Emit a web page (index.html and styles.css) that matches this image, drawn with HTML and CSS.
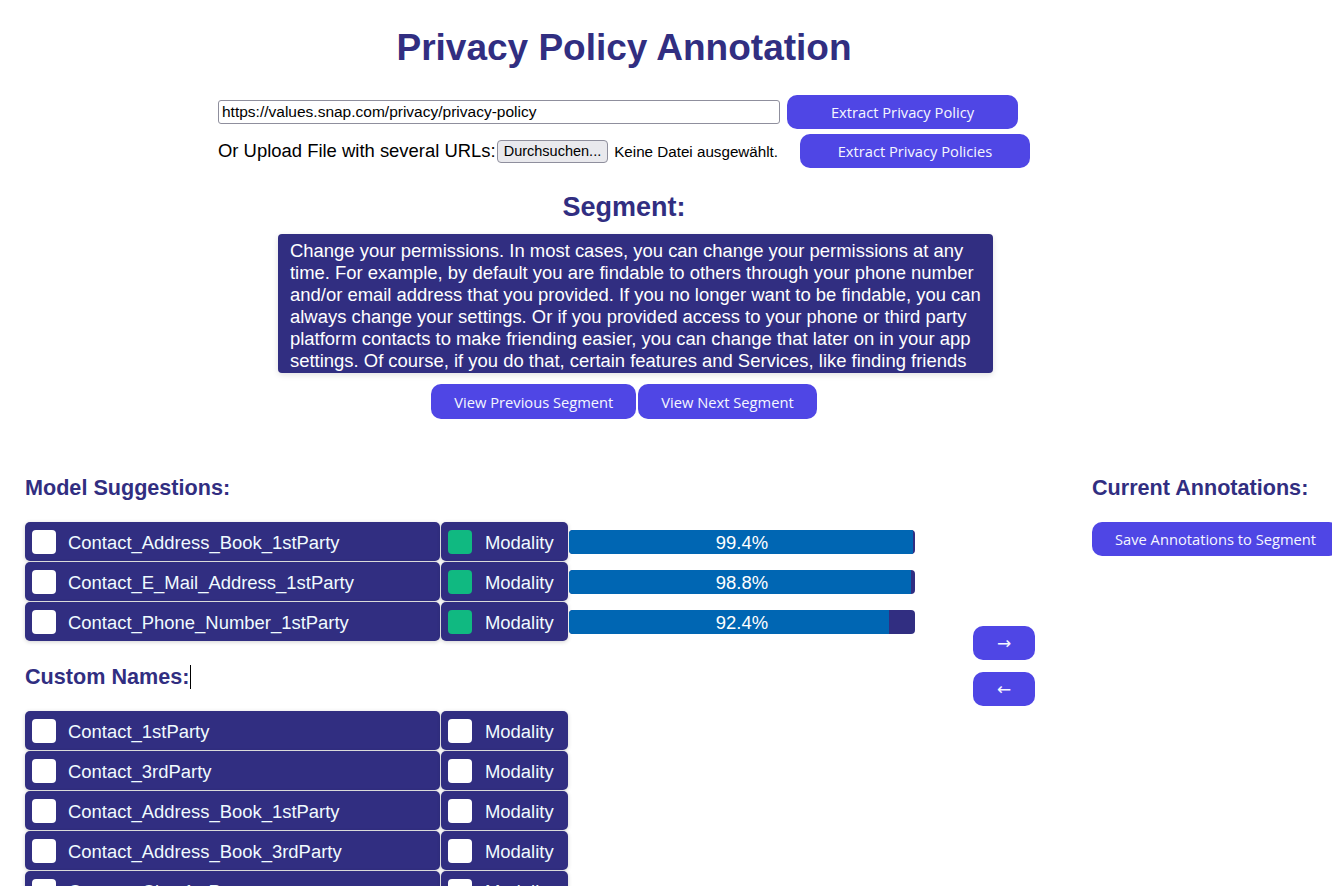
FILE: index.html
```html
<!DOCTYPE html>
<html lang="en">
<head>
<meta charset="utf-8">
<title>Privacy Policy Annotation</title>
<link rel="stylesheet" href="styles.css">
</head>
<body>
<header class="top">
  <h1 class="title">Privacy Policy Annotation</h1>
  <div class="url-form">
    <div class="url-row">
      <input class="url-input" type="text" value="https://values.snap.com/privacy/privacy-policy">
      <button class="btn btn-wide">Extract Privacy Policy</button>
    </div>
    <div class="upload-row">
      <span class="upload-label">Or Upload File with several URLs:</span>
      <span class="file-btn">Durchsuchen...</span>
      <span class="file-name">Keine Datei ausgewählt.</span>
      <button class="btn btn-wide btn-push">Extract Privacy Policies</button>
    </div>
  </div>
  <h2 class="segment-title">Segment:</h2>
  <div class="segment-box">Change your permissions. In most cases, you can change your permissions at any time. For example, by default you are findable to others through your phone number and/or email address that you provided. If you no longer want to be findable, you can always change your settings. Or if you provided access to your phone or third party platform contacts to make friending easier, you can change that later on in your app settings. Of course, if you do that, certain features and Services, like finding friends via your contacts, may lose full functionality.</div>
  <div class="segment-nav">
    <button class="btn btn-nav">View Previous Segment</button>
    <button class="btn btn-nav">View Next Segment</button>
  </div>
</header>

<main class="workspace">
  <section class="suggestions">
    <h3 class="section-title">Model Suggestions:</h3>
    <div class="label-list">
      <div class="label-row">
        <div class="label-box"><span class="check"></span><span class="name">Contact_Address_Book_1stParty</span></div>
        <div class="mod-box"><span class="check check-on"></span><span class="name">Modality</span></div>
        <div class="conf-bar"><div class="conf-fill" style="width: 99.4%"></div><span class="conf-text">99.4%</span></div>
      </div>
      <div class="label-row">
        <div class="label-box"><span class="check"></span><span class="name">Contact_E_Mail_Address_1stParty</span></div>
        <div class="mod-box"><span class="check check-on"></span><span class="name">Modality</span></div>
        <div class="conf-bar"><div class="conf-fill" style="width: 98.8%"></div><span class="conf-text">98.8%</span></div>
      </div>
      <div class="label-row">
        <div class="label-box"><span class="check"></span><span class="name">Contact_Phone_Number_1stParty</span></div>
        <div class="mod-box"><span class="check check-on"></span><span class="name">Modality</span></div>
        <div class="conf-bar"><div class="conf-fill" style="width: 92.4%"></div><span class="conf-text">92.4%</span></div>
      </div>
    </div>

    <h3 class="section-title section-custom">Custom Names:<span class="caret"></span></h3>
    <div class="label-list">
      <div class="label-row">
        <div class="label-box"><span class="check"></span><span class="name">Contact_1stParty</span></div>
        <div class="mod-box"><span class="check"></span><span class="name">Modality</span></div>
      </div>
      <div class="label-row">
        <div class="label-box"><span class="check"></span><span class="name">Contact_3rdParty</span></div>
        <div class="mod-box"><span class="check"></span><span class="name">Modality</span></div>
      </div>
      <div class="label-row">
        <div class="label-box"><span class="check"></span><span class="name">Contact_Address_Book_1stParty</span></div>
        <div class="mod-box"><span class="check"></span><span class="name">Modality</span></div>
      </div>
      <div class="label-row">
        <div class="label-box"><span class="check"></span><span class="name">Contact_Address_Book_3rdParty</span></div>
        <div class="mod-box"><span class="check"></span><span class="name">Modality</span></div>
      </div>
      <div class="label-row">
        <div class="label-box"><span class="check"></span><span class="name">Contact_City_1stParty</span></div>
        <div class="mod-box"><span class="check"></span><span class="name">Modality</span></div>
      </div>
    </div>
  </section>

  <div class="transfer">
    <button class="btn btn-arrow">&#8594;</button>
    <button class="btn btn-arrow">&#8592;</button>
  </div>

  <section class="annotations">
    <h3 class="section-title">Current Annotations:</h3>
    <button class="btn btn-save">Save Annotations to Segment</button>
  </section>
</main>
</body>
</html>
```

FILE: styles.css
```css
html {
  background: #ffffff;
  overflow: hidden;
}

body {
  margin: 8px;
  font-family: "Liberation Sans", Arial, sans-serif;
  font-size: 18.45px;
  color: #000000;
}

.top {
  width: 1232px;
}

.title {
  margin: 20px 0 27px;
  font-size: 37px;
  line-height: 40px;
  font-weight: bold;
  text-align: center;
  color: #312e81;
}

.url-form {
  width: 812px;
  margin-left: 210px;
}

.url-row,
.upload-row {
  display: flex;
  align-items: center;
  height: 34px;
}

.upload-row {
  margin-top: 5px;
}

.url-input {
  box-sizing: border-box;
  width: 562px;
  height: 24px;
  margin: 0 7px 0 0;
  padding: 0 3px;
  border: 1px solid #8f8f9d;
  border-radius: 3px;
  font-family: "Liberation Sans", Arial, sans-serif;
  font-size: 15.5px;
  color: #000000;
  background: #ffffff;
}

.btn {
  box-sizing: border-box;
  height: 34px;
  padding: 0 23px;
  border: none;
  border-radius: 10px;
  background: #4f46e5;
  color: #f5f7ff;
  font-family: "Open Sans", "Noto Sans", sans-serif;
  font-size: 14.7px;
  cursor: pointer;
}

.btn-wide {
  width: 231px;
  padding: 0;
}

.btn-push {
  width: 230px;
  margin-left: auto;
}

.upload-label {
  font-size: 18.45px;
}

.file-btn {
  box-sizing: border-box;
  height: 23px;
  margin-left: 1px;
  padding: 0 6px;
  border: 1px solid #8f8f9d;
  border-radius: 4px;
  background: #e9e9ed;
  font-family: "Liberation Sans", Arial, sans-serif;
  font-size: 14.5px;
  line-height: 21px;
}

.file-name {
  margin-left: 6px;
  font-size: 15.2px;
}

.segment-title {
  margin: 23px 0 11px;
  font-size: 27px;
  line-height: 32px;
  font-weight: bold;
  text-align: center;
  color: #312e81;
}

.segment-box {
  box-sizing: border-box;
  width: 715px;
  height: 139px;
  margin-left: 270px;
  padding: 6px 10px 0 12px;
  overflow: hidden;
  border-radius: 4px;
  background: #312e81;
  color: #ffffff;
  font-size: 18.45px;
  line-height: 22px;
  box-shadow: 0 2px 6px rgba(0, 0, 0, 0.12);
}

.segment-nav {
  display: flex;
  justify-content: center;
  gap: 2px;
  margin-top: 11px;
}

.btn-nav {
  height: 35px;
}

.workspace {
  display: flex;
  align-items: flex-start;
  margin-top: 56px;
  padding-left: 17px;
}

.suggestions {
  width: 890px;
  flex: none;
}

.section-title {
  margin: 0 0 21px;
  font-size: 21.6px;
  line-height: 26px;
  font-weight: bold;
  color: #312e81;
}

.section-custom {
  margin-top: 23px;
  margin-bottom: 21px;
}

.caret {
  display: inline-block;
  width: 1px;
  height: 24px;
  margin-left: 1px;
  background: #000000;
  vertical-align: -5px;
}

.label-list {
  display: flex;
  flex-direction: column;
  gap: 1px;
}

.label-row {
  display: flex;
  align-items: center;
  gap: 1px;
  height: 39px;
}

.label-box,
.mod-box {
  box-sizing: border-box;
  display: flex;
  align-items: center;
  height: 39px;
  border-radius: 5px;
  background: #312e81;
  color: #f0fbff;
  font-size: 18.45px;
  box-shadow: 0 1px 4px rgba(0, 0, 0, 0.18);
}

.label-box {
  width: 415px;
  padding-left: 7px;
  gap: 12px;
}

.mod-box {
  width: 127px;
  padding-left: 7px;
  gap: 13px;
}

.name {
  padding-top: 2px;
  white-space: nowrap;
}

.check {
  width: 24px;
  height: 24px;
  flex: none;
  border-radius: 4px;
  background: #ffffff;
}

.check-on {
  background: #10b981;
}

.conf-bar {
  position: relative;
  width: 346px;
  height: 24px;
  overflow: hidden;
  border-radius: 4px;
  background: #312e81;
}

.conf-fill {
  height: 100%;
  background: #0066b3;
}

.conf-text {
  position: absolute;
  inset: 0;
  padding-top: 1px;
  text-align: center;
  line-height: 24px;
  font-size: 18.45px;
  color: #ffffff;
}

.transfer {
  display: flex;
  flex-direction: column;
  gap: 12px;
  width: 62px;
  margin-left: 58px;
  padding-top: 151px;
  flex: none;
}

.btn-arrow {
  width: 62px;
  padding: 0;
  font-family: "DejaVu Sans", sans-serif;
  font-size: 17px;
}

.annotations {
  margin-left: 57px;
  flex: none;
}

.btn-save {
  width: 247px;
  padding: 0;
}
```
